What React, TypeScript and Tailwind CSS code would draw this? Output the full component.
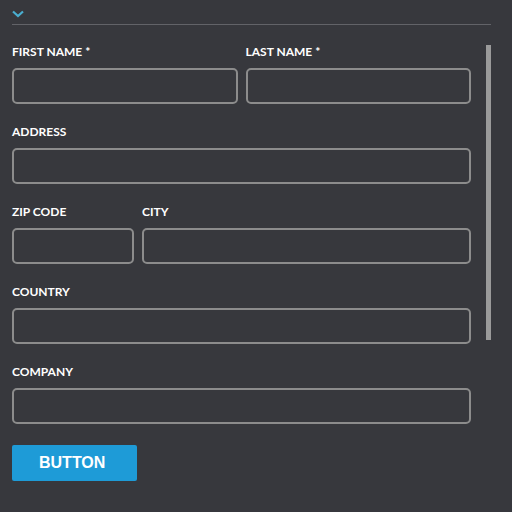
import React from "react";

const labelClass = "block text-[12px] leading-4 font-bold text-white mb-2";
const inputClass =
  "block w-full h-9 rounded-[5px] border-2 border-[#8c8c8c] bg-transparent px-2 text-[13px] text-white outline-none";

function Field({ label, className = "" }: { label: string; className?: string }) {
  return (
    <div className={className}>
      <label className={labelClass}>{label}</label>
      <input type="text" className={inputClass} />
    </div>
  );
}

export default function App() {
  return (
    <div
      className="h-[512px] w-[512px] overflow-hidden bg-[#37383d] pl-3 pr-[21px] pt-[10px]"
      style={{ fontFamily: "Lato, 'Liberation Sans', sans-serif" }}
    >
      <svg width="12" height="8" viewBox="0 0 12 8" className="block">
        <path d="M1 1.5 L6 6 L11 1.5" fill="none" stroke="#4aaed0" strokeWidth="2.2" />
      </svg>
      <div className="mt-[6px] h-px w-full bg-[#626368]" />

      <div className="flex items-start gap-[15px]">
        <form className="flex w-[459px] flex-col gap-5 pt-[19px]">
          <div className="grid grid-cols-2 gap-[8px]">
            <Field label="FIRST NAME *" />
            <Field label="LAST NAME *" />
          </div>
          <Field label="ADDRESS" />
          <div className="grid grid-cols-[122px_1fr] gap-[8px]">
            <Field label="ZIP CODE" />
            <Field label="CITY" />
          </div>
          <Field label="COUNTRY" />
          <Field label="COMPANY" />
          <button
            type="button"
            className="mt-px h-9 w-[125px] rounded-[2px] bg-[#1e9bd7] pl-[27px] text-left text-[16px] font-bold text-white"
            style={{ fontFamily: "'Liberation Sans', Arial, sans-serif" }}
          >
            BUTTON
          </button>
        </form>
        <div className="mt-[20px] h-[295px] w-[5px] bg-[#9a9a9a]" />
      </div>
    </div>
  );
}
